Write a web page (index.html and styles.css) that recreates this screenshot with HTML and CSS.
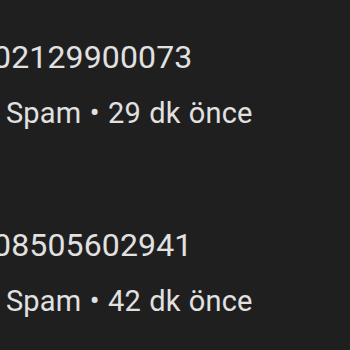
FILE: index.html
```html
<!DOCTYPE html>
<html lang="tr">
<head>
<meta charset="utf-8">
<link rel="stylesheet" href="styles.css">
</head>
<body>
<ul class="calls">
  <li class="call">
    <div class="number">02129900073</div>
    <div class="meta">Spam • 29 dk önce</div>
  </li>
  <li class="call">
    <div class="number">08505602941</div>
    <div class="meta">Spam • 42 dk önce</div>
  </li>
</ul>
</body>
</html>
```
FILE: styles.css
```css
html, body {
  margin: 0;
  padding: 0;
  background: #1f1f1f;
}
body {
  font-family: Roboto, "Noto Sans", sans-serif;
  overflow: hidden;
}
.calls {
  list-style: none;
  margin: 0;
  padding: 37px 0 0 0;
  display: flex;
  flex-direction: column;
  gap: 94px;
}
.call {
  display: flex;
  flex-direction: column;
  gap: 18px;
}
.number {
  font-size: 32px;
  line-height: 40px;
  color: #e1e1e1;
  margin-left: -7px;
  letter-spacing: 0.15px;
  white-space: nowrap;
}
.meta {
  font-size: 29px;
  line-height: 36px;
  color: #e1e1e1;
  margin-left: 6px;
  letter-spacing: 0.15px;
  word-spacing: 1px;
  white-space: nowrap;
}
```
